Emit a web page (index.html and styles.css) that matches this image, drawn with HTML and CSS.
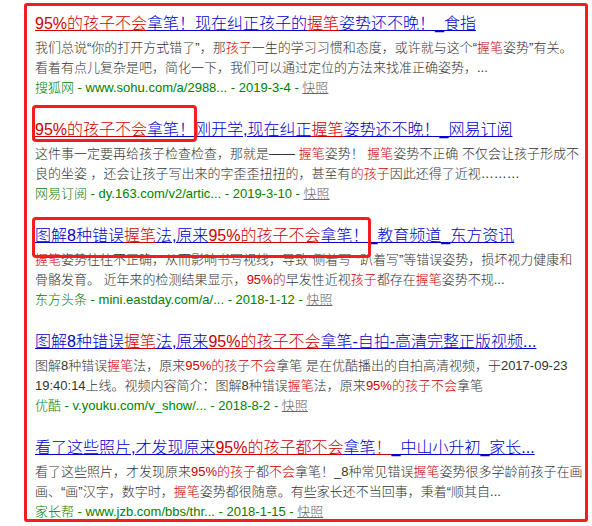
FILE: index.html
```html
<!DOCTYPE html>
<html lang="zh-CN">
<head>
    <meta charset="UTF-8">
    <meta name="viewport" content="width=device-width, initial-scale=1.0">
    <title>95%的孩子不会拿笔</title>
    <link rel="stylesheet" href="styles.css">
</head>
<body>
    <!-- Risultati di ricerca con le cornici rosse disegnate sopra -->
    <div class="results">
        <div class="result">
            <h3 class="title"><a href="#"><em>95%的孩子不会</em>拿笔！现在纠正孩子的<em>握笔</em>姿势还不晚！_食指</a></h3>
            <div class="abstract">我们总说“你的打开方式错了”，那<em>孩子</em>一生的学习习惯和态度，或许就与这个“<em>握笔</em>姿势”有关。<br>看着有点儿复杂是吧，简化一下，我们可以通过定位的方法来找准正确姿势，...</div>
            <div class="source">搜狐网 - www.sohu.com/a/2988... - 2019-3-4 - <a href="#" class="snap">快照</a></div>
        </div>

        <div class="result">
            <h3 class="title"><a href="#"><em>95%的孩子不会</em>拿笔！刚开学,现在纠正<em>握笔</em>姿势还不晚！_网易订阅</a></h3>
            <div class="abstract">这件事一定要再给孩子检查检查，那就是—— <em>握笔</em>姿势！ <em>握笔</em>姿势不正确 不仅会让孩子形成不<br>良的坐姿 ，还会让孩子写出来的字歪歪扭扭的，甚至有<em>的孩子</em>因此还得了近视………</div>
            <div class="source">网易订阅 - dy.163.com/v2/artic... - 2019-3-10 - <a href="#" class="snap">快照</a></div>
        </div>

        <div class="result">
            <h3 class="title"><a href="#">图解8种错误<em>握笔</em>法,原来<em>95%的孩子不会</em>拿笔！_教育频道_东方资讯</a></h3>
            <div class="abstract"><em>握笔</em>姿势往往不正确，从而影响书写视线，导致“侧着写”“趴着写”等错误姿势，损坏视力健康和<br>骨骼发育。 近年来的检测结果显示，<em>95%的</em>早发性近视<em>孩子</em>都存在<em>握笔</em>姿势不规...</div>
            <div class="source">东方头条 - mini.eastday.com/a/... - 2018-1-12 - <a href="#" class="snap">快照</a></div>
        </div>

        <div class="result">
            <h3 class="title"><a href="#">图解8种错误<em>握笔</em>法,原来<em>95%的孩子不会</em>拿笔-自拍-高清完整正版视频...</a></h3>
            <div class="abstract">图解8种错误<em>握笔</em>法，原来<em>95%的孩子不会</em>拿笔 是在优酷播出的自拍高清视频，于2017-09-23<br>19:40:14上线。视频内容简介：图解8种错误<em>握笔</em>法，原来<em>95%的孩子不会</em>拿笔</div>
            <div class="source">优酷 - v.youku.com/v_show/... - 2018-8-2 - <a href="#" class="snap">快照</a></div>
        </div>

        <div class="result">
            <h3 class="title"><a href="#">看了这些照片,才发现原来<em>95%的孩子都不会</em>拿笔<em>！</em>_中山小升初_家长...</a></h3>
            <div class="abstract">看了这些照片，才发现原来<em>95%的孩子</em>都<em>不会</em>拿笔！_8种常见错误<em>握笔</em>姿势很多学龄前孩子在画<br>画、“画”汉字，数字时，<em>握笔</em>姿势都很随意。有些家长还不当回事，秉着“顺其自...</div>
            <div class="source">家长帮 - www.jzb.com/bbs/thr... - 2018-1-15 - <a href="#" class="snap">快照</a></div>
        </div>

        <span class="mark mark-first"></span>
        <span class="mark mark-second"></span>
    </div>
</body>
</html>
```

FILE: styles.css
```css
body {
    margin: 0;
    padding: 0;
    background-color: #ffffff;
    font-family: "Liberation Sans", "Noto Sans CJK SC", sans-serif;
    font-weight: 300;
}

.results {
    position: relative;
    box-sizing: border-box;
    width: 564px;
    height: 519px;
    margin: 3px 0 0 24px;
    padding: 7px 0 0 8px;
    border: 3px solid #f41c1c;
    border-radius: 3px;
    overflow: hidden;
}

.result {
    margin-bottom: 21px;
}

.title {
    margin: 0 0 3px 0;
    font-size: 16px;
    font-weight: 300;
    line-height: 22px;
    white-space: nowrap;
}

.title a {
    color: #0000cc;
    text-decoration: underline;
}

.title em {
    color: #cc0000;
    font-style: normal;
    text-decoration: underline;
}

.abstract {
    font-size: 13px;
    line-height: 20px;
    color: #333;
    white-space: nowrap;
}

.abstract em {
    color: #cc0000;
    font-style: normal;
}

.source {
    font-size: 13px;
    line-height: 20px;
    color: #008000;
    white-space: nowrap;
}

.snap {
    color: #666;
    text-decoration: underline;
}

/* Cornici rosse sopra i titoli */
.mark {
    position: absolute;
    box-sizing: border-box;
    border: 3px solid #f41c1c;
    border-radius: 4px;
}

.mark-first {
    left: 5px;
    top: 99px;
    width: 165px;
    height: 37px;
}

.mark-second {
    left: 5px;
    top: 211px;
    width: 339px;
    height: 41px;
}
```
